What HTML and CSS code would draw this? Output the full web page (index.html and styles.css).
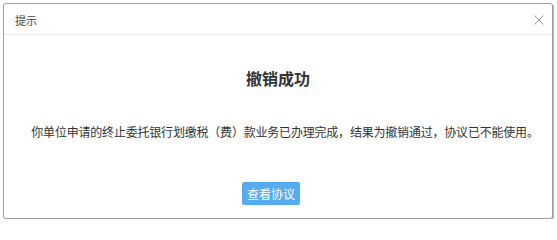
FILE: index.html
```
<!DOCTYPE html>
<html lang="zh-CN">
<head>
<meta charset="utf-8">
<title>提示</title>
<link rel="stylesheet" href="styles.css">
</head>
<body>
<div class="dialog">
  <div class="header">
    <span class="header-title">提示</span>
    <svg class="close" width="10" height="10" viewBox="0 0 10 10" aria-label="关闭">
      <path d="M0.5 0.5 L9.5 9.5 M9.5 0.5 L0.5 9.5" stroke="#9a9a9a" stroke-width="1" fill="none"/>
    </svg>
  </div>
  <div class="content">
    <h1 class="title">撤销成功</h1>
    <p class="message">你单位申请的终止委托银行划缴税（费）款业务已办理完成，结果为撤销通过，协议已不能使用。</p>
    <button class="btn">查看协议</button>
  </div>
</div>
</body>
</html>
```

FILE: styles.css
```
html, body {
  margin: 0;
  padding: 0;
  background: #ffffff;
}
body {
  font-family: "Noto Sans CJK SC", "Microsoft YaHei", sans-serif;
  color: #333333;
}
.dialog {
  margin: 3px 0 0 3px;
  width: 548px;
  height: 214px;
  border: 1px solid #a0a0a0;
  border-radius: 3px;
  box-shadow: 1px 1px 1px #b0b0b0;
  background: #ffffff;
  display: flex;
  flex-direction: column;
}
.header {
  height: 29px;
  border-bottom: 1px solid #ececec;
  display: flex;
  align-items: center;
  justify-content: space-between;
  padding: 1px 8px 0 11px;
}
.header-title {
  font-size: 11px;
  color: #444444;
  line-height: 14px;
}
.close {
  display: block;
}
.content {
  display: flex;
  flex-direction: column;
  align-items: center;
}
.title {
  margin: 33px 0 0 0;
  font-size: 16px;
  line-height: 20px;
  font-weight: bold;
  color: #333333;
}
.message {
  margin: 35px 0 0 14px;
  font-size: 12px;
  line-height: 18px;
  letter-spacing: -0.2px;
  color: #333333;
}
.btn {
  margin: 41px 14px 0 0;
  width: 58px;
  height: 23px;
  padding: 0;
  border: none;
  border-radius: 2px;
  background: #55acf0;
  color: #ffffff;
  font-family: "Noto Sans CJK SC", "Microsoft YaHei", sans-serif;
  font-size: 12px;
  line-height: 23px;
}
```
